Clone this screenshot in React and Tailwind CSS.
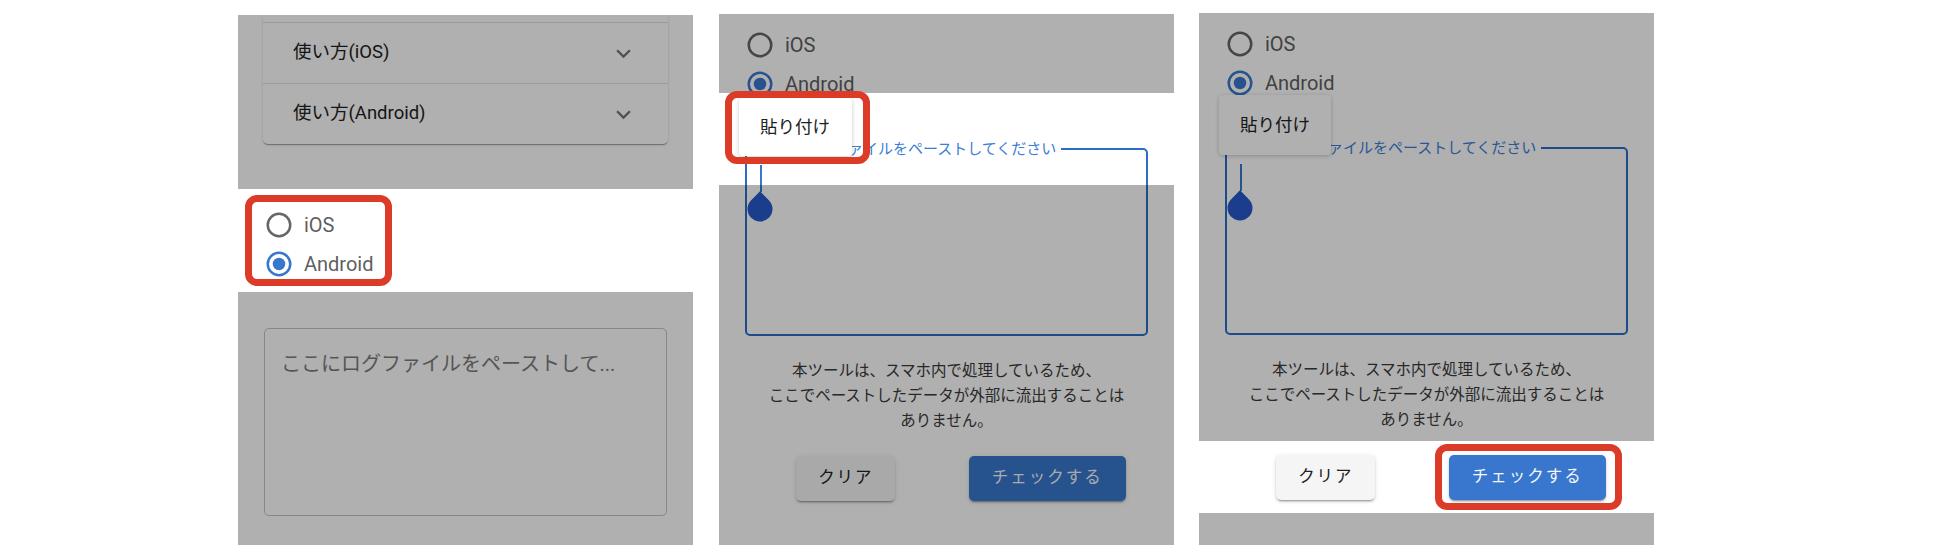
import React from "react";

const BLUE = "#3877cd";

function Radio({ checked, label }) {
  return (
    <div className="flex h-[39px] items-center pl-[26px]">
      <svg width="30" height="30" viewBox="0 0 24 24">
        <circle cx="12" cy="12" r="9" fill="none" stroke={checked ? BLUE : "#666666"} strokeWidth="2" />
        {checked && <circle cx="12" cy="12" r="5" fill={BLUE} />}
      </svg>
      <span className="ml-[10px] text-[20px] leading-[24px] text-[#5f5f5f]">{label}</span>
    </div>
  );
}

function Chevron() {
  return (
    <svg width="29" height="29" viewBox="0 0 24 24">
      <path d="M16.59 8.59 12 13.17 7.41 8.59 6 10l6 6 6-6z" fill="#757575" />
    </svg>
  );
}

function FocusedTextarea() {
  return (
    <div className="relative mx-[26px] mt-[45px] h-[188px] rounded-[5px] border-2 border-[#2a6ec8]">
      <span className="absolute -top-[11px] left-[6px] bg-white px-[5px] text-[15px] leading-[20px] whitespace-nowrap text-[#3b7ed6]">
        ここにログファイルをペーストしてください
      </span>
      <div className="absolute left-[13px] top-[15px] h-[27px] w-[1.5px] bg-[#3877cd]" />
      <svg className="absolute left-[0px] top-[40px]" width="26" height="32" viewBox="0 0 26 32">
        <path d="M13 1.3 L21.84 10.16 A12.5 12.5 0 1 1 4.16 10.16 Z" fill="#2659cb" />
      </svg>
    </div>
  );
}

function Buttons() {
  return (
    <div className="mx-[26px] mt-[22px] grid grid-cols-2">
      <div className="flex justify-center">
        <div className="flex h-[45px] w-[99px] items-center justify-center rounded-[5px] bg-[#f5f5f5] text-[16.5px] tracking-[1.8px] text-[#222] shadow-[0_3px_1px_-2px_rgba(0,0,0,0.2),0_2px_2px_0_rgba(0,0,0,0.14),0_1px_5px_0_rgba(0,0,0,0.12)]">
          クリア
        </div>
      </div>
      <div className="flex justify-center">
        <div className="flex h-[45px] w-[157px] items-center justify-center rounded-[5px] bg-[#3877cd] text-[16.5px] tracking-[2px] text-[#f3f6fb] shadow-[0_3px_1px_-2px_rgba(0,0,0,0.2),0_2px_2px_0_rgba(0,0,0,0.14),0_1px_5px_0_rgba(0,0,0,0.12)]">
          チェックする
        </div>
      </div>
    </div>
  );
}

function Description() {
  return (
    <div className="mt-[23px] text-center text-[15.5px] leading-[25px] text-[#3a3a3a]">
      <p>本ツールは、スマホ内で処理しているため、</p>
      <p>ここでペーストしたデータが外部に流出することは</p>
      <p>ありません。</p>
    </div>
  );
}

function Panel1() {
  return (
    <div className="relative mt-[15px] h-[530px] w-[455px] shrink-0 overflow-hidden bg-white">
      <div className="mx-[25px] rounded-b-[5px] bg-white shadow-[0_2px_1px_-1px_rgba(0,0,0,0.2),0_1px_1px_0_rgba(0,0,0,0.14),0_1px_3px_0_rgba(0,0,0,0.12)]">
        <div className="h-[8px] border-b border-[#e0e0e0]" />
        <div className="flex h-[61px] items-center justify-between border-b border-[#e0e0e0] pl-[30px] pr-[30px]">
          <span className="text-[18.5px] text-[#222]">使い方(iOS)</span>
          <Chevron />
        </div>
        <div className="flex h-[60px] items-center justify-between pl-[30px] pr-[30px]">
          <span className="text-[18.5px] text-[#222]">使い方(Android)</span>
          <Chevron />
        </div>
      </div>
      <div className="mt-[61px]">
        <Radio label="iOS" />
        <Radio label="Android" checked />
      </div>
      <div className="mx-[26px] mt-[45px] h-[188px] rounded-[5px] border border-[#c4c4c4] px-[16px] pt-[22px]">
        <span className="text-[20px] leading-[26px] text-[#7c7c7c]">ここにログファイルをペーストして...</span>
      </div>
      <div className="absolute left-0 right-0 top-0 h-[174px] bg-[rgba(0,0,0,0.31)]" />
      <div className="absolute bottom-0 left-0 right-0 top-[277px] bg-[rgba(0,0,0,0.31)]" />
      <div className="absolute left-[7px] top-[180px] h-[91px] w-[147px] rounded-[12px] border-[7px] border-[#dc3b28]" />
    </div>
  );
}

function Popup({ third }) {
  return (
    <div
      className={
        third
          ? "absolute left-[20px] top-[82px] flex h-[60px] w-[112px] items-center rounded-[4px] bg-white pl-[21px] text-[17.5px] text-[#222] shadow-[0_1px_4px_rgba(0,0,0,0.22)]"
          : "absolute left-[20px] top-[84px] flex h-[58px] w-[113px] items-center rounded-[4px] bg-white pl-[21px] text-[17.5px] text-[#222] shadow-[0_1px_4px_rgba(0,0,0,0.22)]"
      }
    >
      貼り付け
    </div>
  );
}

function PhoneContent({ third }) {
  return (
    <>
      <div className="pt-[11px]">
        <Radio label="iOS" />
        <Radio label="Android" checked />
      </div>
      <FocusedTextarea />
      <Description />
      <Buttons />
      <Popup third={third} />
    </>
  );
}

function Panel2() {
  return (
    <div className="relative mt-[14px] h-[531px] w-[455px] shrink-0 overflow-hidden bg-white">
      <PhoneContent />
      <div className="absolute left-0 right-0 top-0 h-[79px] bg-[rgba(0,0,0,0.31)]" />
      <div className="absolute bottom-0 left-0 right-0 top-[171px] bg-[rgba(0,0,0,0.31)]" />
      <div className="absolute left-[6px] top-[77px] h-[73px] w-[145px] rounded-[12px] border-[7px] border-[#dc3b28]" />
    </div>
  );
}

function Panel3() {
  return (
    <div className="relative mt-[13px] h-[532px] w-[455px] shrink-0 overflow-hidden bg-white">
      <PhoneContent third />
      <div className="absolute left-0 right-0 top-0 h-[428px] bg-[rgba(0,0,0,0.31)]" />
      <div className="absolute bottom-0 left-0 right-0 top-[500px] bg-[rgba(0,0,0,0.31)]" />
      <div className="absolute left-[236px] top-[431px] h-[66px] w-[187px] rounded-[12px] border-[7px] border-[#dc3b28]" />
    </div>
  );
}

export default function App() {
  return (
    <div className="flex h-[560px] w-[1936px] items-start bg-white pl-[238px] font-['Roboto','Noto_Sans_CJK_JP',sans-serif]">
      <Panel1 />
      <div className="w-[26px] shrink-0" />
      <Panel2 />
      <div className="w-[25px] shrink-0" />
      <Panel3 />
    </div>
  );
}
